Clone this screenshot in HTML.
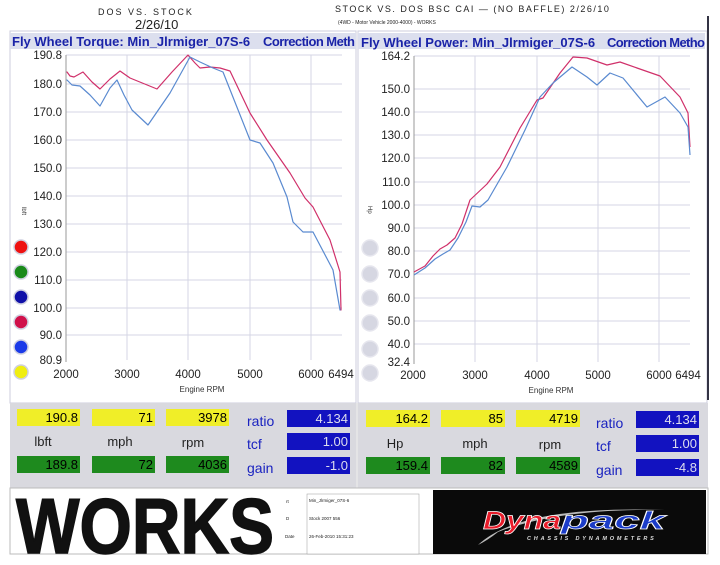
<!DOCTYPE html>
<html><head><meta charset="utf-8"><style>
body{margin:0;width:720px;height:560px;overflow:hidden;background:#fff;font-family:"Liberation Sans",sans-serif}
</style></head><body>
<svg width="720" height="560" xmlns="http://www.w3.org/2000/svg" font-family="Liberation Sans, sans-serif">
<rect width="720" height="560" fill="#fff"/>
<g font-family="Liberation Sans" fill="#222" font-size="9">
<text x="98" y="15" letter-spacing="2">DOS  VS. STOCK</text>
<text x="135" y="29" font-size="13">2/26/10</text>
<text x="335" y="12" letter-spacing="1.5">STOCK  VS. DOS  BSC  CAI  —  (NO BAFFLE) 2/26/10</text>
<text x="338" y="24" font-size="5">(4WD - Motor Vehicle 2000-4000) - WORKS</text>
</g>
<rect x="10" y="31" width="346" height="372" fill="#fff" stroke="#ccd" />
<rect x="358" y="31" width="349" height="372" fill="#fff" stroke="#ccd"/>
<line x1="708" y1="16" x2="708" y2="400" stroke="#334" stroke-width="2"/>
<rect x="10" y="33" width="346" height="16" fill="#dcdfee"/>
<rect x="358" y="33" width="347" height="16" fill="#dcdfee"/>
<text x="12" y="46" font-size="13" font-weight="bold" fill="#1a23a8">Fly Wheel Torque: Min_Jlrmiger_07S-6</text>
<text x="263" y="46" font-size="13" font-weight="bold" fill="#1a23a8" textLength="92">Correction Meth</text>
<text x="361" y="47" font-size="13" font-weight="bold" fill="#1a23a8">Fly Wheel Power: Min_Jlrmiger_07S-6</text>
<text x="607" y="47" font-size="13" font-weight="bold" fill="#1a23a8" textLength="98">Correction Metho</text>
<g stroke="#d4d6e4" stroke-width="1">
<line x1="66" y1="55" x2="342" y2="55"/><line x1="66" y1="84" x2="342" y2="84"/><line x1="66" y1="112" x2="342" y2="112"/><line x1="66" y1="140" x2="342" y2="140"/><line x1="66" y1="168" x2="342" y2="168"/><line x1="66" y1="196" x2="342" y2="196"/><line x1="66" y1="224" x2="342" y2="224"/><line x1="66" y1="252" x2="342" y2="252"/><line x1="66" y1="280" x2="342" y2="280"/><line x1="66" y1="308" x2="342" y2="308"/><line x1="66" y1="335" x2="342" y2="335"/>
<line x1="127" y1="55" x2="127" y2="360"/><line x1="188" y1="55" x2="188" y2="360"/><line x1="250" y1="55" x2="250" y2="360"/><line x1="311" y1="55" x2="311" y2="360"/>
</g>
<line x1="66" y1="55" x2="66" y2="362" stroke="#999"/>
<g font-size="11.5" fill="#222" text-anchor="end">
<text x="62" y="59">190.8</text><text x="62" y="88">180.0</text><text x="62" y="116">170.0</text><text x="62" y="144">160.0</text><text x="62" y="172">150.0</text><text x="62" y="200">140.0</text><text x="62" y="228">130.0</text><text x="62" y="256">120.0</text><text x="62" y="284">110.0</text><text x="62" y="312">100.0</text><text x="62" y="339">90.0</text><text x="62" y="364">80.9</text>
</g>
<g font-size="11.5" fill="#222" text-anchor="middle">
<text x="66" y="378">2000</text><text x="127" y="378">3000</text><text x="188" y="378">4000</text><text x="250" y="378">5000</text><text x="311" y="378">6000</text><text x="341" y="378">6494</text>
</g>
<text x="202" y="392" font-size="8" fill="#333" text-anchor="middle">Engine RPM</text>
<text x="22" y="207" font-size="6" fill="#333" transform="rotate(90 22 207)">lbft</text>
<g stroke="#cfd0e0" stroke-width="1.5">
<circle cx="21" cy="247" r="7" fill="#ee1111"/><circle cx="21" cy="272" r="7" fill="#1a8a1a"/><circle cx="21" cy="297" r="7" fill="#1010a8"/><circle cx="21" cy="322" r="7" fill="#d0104a"/><circle cx="21" cy="347" r="7" fill="#1a3ae8"/><circle cx="21" cy="372" r="7" fill="#f0ee10"/>
</g>
<polyline fill="none" stroke="#d0306a" stroke-width="1.2" stroke-linejoin="round" stroke-linecap="round" points="67,72 70,76 74,77 83,72 92,82 100,89 110,79 120,71 130,78 157,89 172,72 188,55 195,63 200,68 210,67 220,68 230,71 250,113 267,140 290,173 305,198 313,207 330,240 340,272 341,310"/>
<polyline fill="none" stroke="#5a8ad0" stroke-width="1.2" stroke-linejoin="round" stroke-linecap="round" points="67,80 72,85 80,86 90,95 100,106 110,88 117,80 124,95 132,110 148,125 170,93 190,57 200,62 213,68 223,72 250,140 260,143 273,163 287,197 293,222 303,232 313,232 333,270 340,310"/>
<g stroke="#d4d6e4" stroke-width="1">
<line x1="414" y1="56" x2="690" y2="56"/><line x1="414" y1="89" x2="690" y2="89"/><line x1="414" y1="112" x2="690" y2="112"/><line x1="414" y1="135" x2="690" y2="135"/><line x1="414" y1="158" x2="690" y2="158"/><line x1="414" y1="182" x2="690" y2="182"/><line x1="414" y1="205" x2="690" y2="205"/><line x1="414" y1="228" x2="690" y2="228"/><line x1="414" y1="251" x2="690" y2="251"/><line x1="414" y1="274" x2="690" y2="274"/><line x1="414" y1="298" x2="690" y2="298"/><line x1="414" y1="321" x2="690" y2="321"/><line x1="414" y1="344" x2="690" y2="344"/>
<line x1="475" y1="56" x2="475" y2="362"/><line x1="537" y1="56" x2="537" y2="362"/><line x1="598" y1="56" x2="598" y2="362"/><line x1="659" y1="56" x2="659" y2="362"/>
</g>
<line x1="414" y1="56" x2="414" y2="364" stroke="#999"/>
<g font-size="11.5" fill="#222" text-anchor="end">
<text x="410" y="60">164.2</text><text x="410" y="93">150.0</text><text x="410" y="116">140.0</text><text x="410" y="139">130.0</text><text x="410" y="162">120.0</text><text x="410" y="186">110.0</text><text x="410" y="209">100.0</text><text x="410" y="232">90.0</text><text x="410" y="255">80.0</text><text x="410" y="278">70.0</text><text x="410" y="302">60.0</text><text x="410" y="325">50.0</text><text x="410" y="348">40.0</text><text x="410" y="366">32.4</text>
</g>
<g font-size="11.5" fill="#222" text-anchor="middle">
<text x="413" y="379">2000</text><text x="475" y="379">3000</text><text x="537" y="379">4000</text><text x="598" y="379">5000</text><text x="659" y="379">6000</text><text x="688" y="379">6494</text>
</g>
<text x="551" y="393" font-size="8" fill="#333" text-anchor="middle">Engine RPM</text>
<text x="368" y="206" font-size="6" fill="#333" transform="rotate(90 368 206)">Hp</text>
<g fill="#d6d7e2" stroke="#e6e6ee" stroke-width="1.5">
<circle cx="370" cy="248" r="8"/><circle cx="370" cy="274" r="8"/><circle cx="370" cy="298" r="8"/><circle cx="370" cy="323" r="8"/><circle cx="370" cy="349" r="8"/><circle cx="370" cy="373" r="8"/>
</g>
<polyline fill="none" stroke="#d0306a" stroke-width="1.2" stroke-linejoin="round" points="414,272 425,266 433,256 440,249 447,245 455,238 462,224 470,200 487,184 500,167 520,128 537,100 543,98 560,73 573,57 587,58 607,65 620,62 637,68 660,76 680,97 688,113 690,147"/>
<polyline fill="none" stroke="#5a8ad0" stroke-width="1.2" stroke-linejoin="round" points="414,275 425,268 435,259 443,254 450,250 458,238 466,222 472,206 480,207 488,200 507,167 525,130 540,97 553,83 572,67 587,77 597,85 610,73 623,78 647,107 665,97 680,113 688,127 690,155"/>
<rect x="10" y="403" width="698" height="85" fill="#d9d9df"/>
<line x1="357" y1="403" x2="357" y2="488" stroke="#eee"/>
<g font-size="13" text-anchor="end">
<rect x="17" y="409" width="63" height="17" fill="#f0ee28"/><text x="78" y="422">190.8</text>
<rect x="92" y="409" width="63" height="17" fill="#f0ee28"/><text x="153" y="422">71</text>
<rect x="166" y="409" width="63" height="17" fill="#f0ee28"/><text x="227" y="422">3978</text>
<rect x="17" y="456" width="63" height="17" fill="#1e8a1e"/><text x="78" y="469">189.8</text>
<rect x="92" y="456" width="63" height="17" fill="#1e8a1e"/><text x="153" y="469">72</text>
<rect x="166" y="456" width="63" height="17" fill="#1e8a1e"/><text x="227" y="469">4036</text>
<rect x="287" y="410" width="63" height="17" fill="#1212c0"/><text x="348" y="423" fill="#dde">4.134</text>
<rect x="287" y="433" width="63" height="17" fill="#1212c0"/><text x="348" y="446" fill="#dde">1.00</text>
<rect x="287" y="457" width="63" height="17" fill="#1212c0"/><text x="348" y="470" fill="#dde">-1.0</text>
<rect x="366" y="410" width="64" height="17" fill="#f0ee28"/><text x="428" y="423">164.2</text>
<rect x="441" y="410" width="64" height="17" fill="#f0ee28"/><text x="503" y="423">85</text>
<rect x="516" y="410" width="64" height="17" fill="#f0ee28"/><text x="578" y="423">4719</text>
<rect x="366" y="457" width="64" height="17" fill="#1e8a1e"/><text x="428" y="470">159.4</text>
<rect x="441" y="457" width="64" height="17" fill="#1e8a1e"/><text x="503" y="470">82</text>
<rect x="516" y="457" width="64" height="17" fill="#1e8a1e"/><text x="578" y="470">4589</text>
<rect x="636" y="411" width="63" height="17" fill="#1212c0"/><text x="697" y="424" fill="#dde">4.134</text>
<rect x="636" y="435" width="63" height="17" fill="#1212c0"/><text x="697" y="448" fill="#dde">1.00</text>
<rect x="636" y="459" width="63" height="17" fill="#1212c0"/><text x="697" y="472" fill="#dde">-4.8</text>
</g>
<g font-size="13" fill="#222" text-anchor="middle">
<text x="43" y="446">lbft</text><text x="120" y="446">mph</text><text x="193" y="447">rpm</text>
<text x="395" y="448">Hp</text><text x="475" y="448">mph</text><text x="550" y="449">rpm</text>
</g>
<g font-size="14" fill="#1a23c0">
<text x="247" y="426">ratio</text><text x="247" y="449">tcf</text><text x="247" y="473">gain</text>
<text x="596" y="428">ratio</text><text x="596" y="451">tcf</text><text x="596" y="475">gain</text>
</g>
<rect x="10" y="488" width="698" height="66" fill="#fff" stroke="#bbb"/>
<text x="16" y="553" font-size="78" font-weight="bold" fill="#111" stroke="#111" stroke-width="1.5" textLength="258" lengthAdjust="spacingAndGlyphs">WORKS</text>
<rect x="307" y="494" width="112" height="60" fill="#fff" stroke="#999" stroke-width="0.5"/>
<g font-size="4.5" fill="#222">
<text x="286" y="503">rt</text><text x="286" y="520">D</text><text x="285" y="538">Date</text>
<text x="309" y="502">Min_Jlrmiger_07S-6</text><text x="309" y="520">Stock 2007 556</text><text x="309" y="538">26-Feb-2010 15:31:23</text>
</g>
<rect x="433" y="490" width="273" height="64" fill="#0a0a0a"/>
<path d="M 478 545 Q 520 505 665 510 Q 560 508 498 532 Q 488 540 478 545 Z" fill="#bbb"/>
<text x="483" y="529" font-size="25" font-weight="bold" font-style="italic" fill="#e81c2a" stroke="#fff" stroke-width="0.7" textLength="78" lengthAdjust="spacingAndGlyphs">Dyna</text>
<text x="561" y="529" font-size="25" font-weight="bold" font-style="italic" fill="#1b3cc8" stroke="#fff" stroke-width="0.7" textLength="104" lengthAdjust="spacingAndGlyphs">pack</text>
<text x="527" y="540" font-size="5.5" font-weight="bold" font-style="italic" fill="#ddd" letter-spacing="1.2" textLength="128">CHASSIS DYNAMOMETERS</text>
</svg>
</body></html>
